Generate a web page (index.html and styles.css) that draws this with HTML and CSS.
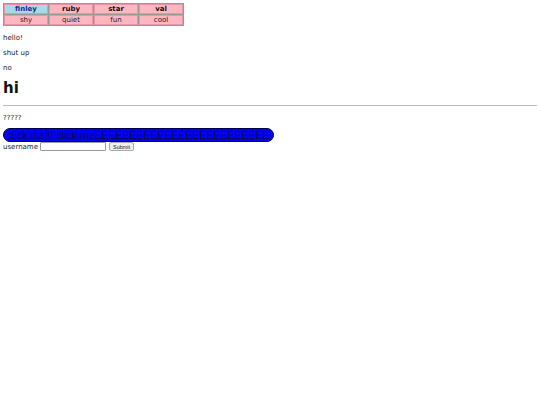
FILE: index.html
```html
<!DOCTYPE html>
<html>
<head>
<meta charset="utf-8">
<link rel="stylesheet" href="styles.css">
</head>
<body>
<table class="friends">
  <tr>
    <th class="first">finley</th>
    <th>ruby</th>
    <th>star</th>
    <th>val</th>
  </tr>
  <tr>
    <td>shy</td>
    <td>quiet</td>
    <td>fun</td>
    <td>cool</td>
  </tr>
</table>
<p class="txt">hello!</p>
<p class="txt">shut up</p>
<p class="txt">no</p>
<h2 class="big">hi</h2>
<hr class="rule">
<p class="txt last">?????</p>
<button class="click">click me!!! click meEEEEEEEEEEEEEEEEEEEEEEEEE</button>
<form class="login">
  <label class="lbl">username</label>
  <input class="field" type="text">
  <input class="submit" type="submit" value="Submit">
</form>
</body>
</html>
```
FILE: styles.css
```css
body {
  margin: 3px;
  font-family: "DejaVu Sans", Verdana, sans-serif;
  font-size: 7px;
  color: #222;
  background: #fff;
}
.friends {
  border-collapse: separate;
  border-spacing: 1px;
  background: #999;
  border: 0;
  margin: 0 0 8px 0;
}
.friends th, .friends td {
  width: 42px;
  height: 8px;
  padding: 0;
  background: #ffb6c1;
  border: 1px solid #e597a3;
  text-align: center;
  font-size: 7px;
  line-height: 8px;
  color: #222;
}
.friends th {
  font-weight: bold;
  color: #111;
}
.friends th.first {
  background: #a8d8ea;
  color: #1a2a8a;
}
.txt {
  margin: 7px 0;
  line-height: 8px;
}
.txt.last {
  margin-bottom: 6px;
}
.big {
  font-size: 15px;
  margin: 8px 0;
  line-height: 17px;
  color: #111;
}
.rule {
  border: 0;
  border-top: 1px solid #bbb;
  margin: 6px 0 8px 0;
}
.click {
  display: block;
  height: 14px;
  margin: 0;
  padding: 0 3px;
  background: #0000f0;
  border: 1px solid #000050;
  border-radius: 8px;
  font-family: "Liberation Sans", Arial, sans-serif;
  font-size: 10.5px;
  color: #0a0a40;
  text-align: left;
  white-space: nowrap;
  line-height: 12px;
}
.login {
  display: flex;
  align-items: center;
  gap: 2px;
  margin: 0;
}
.lbl {
  font-size: 7px;
  color: #222;
}
.field {
  width: 64px;
  height: 7px;
  padding: 0;
  margin: 0;
  border: 1px solid #999;
  border-radius: 1px;
}
.submit {
  font-family: "Liberation Sans", Arial, sans-serif;
  font-size: 5.5px;
  height: 9px;
  padding: 0 3px;
  margin-left: 1px;
  background: #eee;
  border: 1px solid #aaa;
  border-radius: 2px;
  color: #222;
}
```
